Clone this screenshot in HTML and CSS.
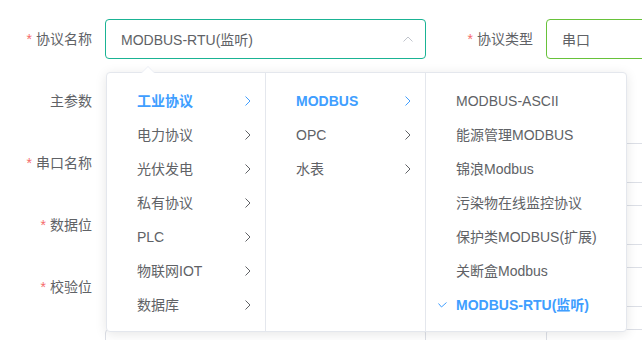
FILE: index.html
```html
<!DOCTYPE html>
<html lang="zh">
<head>
<meta charset="utf-8">
<link rel="stylesheet" href="styles.css">
</head>
<body>
<div class="form">
  <div class="row">
    <div class="item">
      <label class="label"><span class="req">*</span>协议名称</label>
      <div class="select">
        <div class="input input-focus">
          <span class="value">MODBUS-RTU(监听)</span>
          <svg class="caret" width="10" height="6" viewBox="0 0 10 6"><path d="M0.5 5.5 L5 1 L9.5 5.5" fill="none" stroke="#c0c4cc" stroke-width="1"/></svg>
        </div>
        <div class="popper">
          <div class="popper-arrow"></div>
          <ul class="menu menu-1">
            <li class="node active">工业协议<svg class="chev" width="6" height="10" viewBox="0 0 6 10"><path d="M0.5 0.5 L5 5 L0.5 9.5" fill="none" stroke="#409eff" stroke-width="1"/></svg></li>
            <li class="node">电力协议<svg class="chev" width="6" height="10" viewBox="0 0 6 10"><path d="M0.5 0.5 L5 5 L0.5 9.5" fill="none" stroke="#606266" stroke-width="1"/></svg></li>
            <li class="node">光伏发电<svg class="chev" width="6" height="10" viewBox="0 0 6 10"><path d="M0.5 0.5 L5 5 L0.5 9.5" fill="none" stroke="#606266" stroke-width="1"/></svg></li>
            <li class="node">私有协议<svg class="chev" width="6" height="10" viewBox="0 0 6 10"><path d="M0.5 0.5 L5 5 L0.5 9.5" fill="none" stroke="#606266" stroke-width="1"/></svg></li>
            <li class="node">PLC<svg class="chev" width="6" height="10" viewBox="0 0 6 10"><path d="M0.5 0.5 L5 5 L0.5 9.5" fill="none" stroke="#606266" stroke-width="1"/></svg></li>
            <li class="node">物联网IOT<svg class="chev" width="6" height="10" viewBox="0 0 6 10"><path d="M0.5 0.5 L5 5 L0.5 9.5" fill="none" stroke="#606266" stroke-width="1"/></svg></li>
            <li class="node">数据库<svg class="chev" width="6" height="10" viewBox="0 0 6 10"><path d="M0.5 0.5 L5 5 L0.5 9.5" fill="none" stroke="#606266" stroke-width="1"/></svg></li>
          </ul>
          <ul class="menu menu-2">
            <li class="node active">MODBUS<svg class="chev" width="6" height="10" viewBox="0 0 6 10"><path d="M0.5 0.5 L5 5 L0.5 9.5" fill="none" stroke="#409eff" stroke-width="1"/></svg></li>
            <li class="node">OPC<svg class="chev" width="6" height="10" viewBox="0 0 6 10"><path d="M0.5 0.5 L5 5 L0.5 9.5" fill="none" stroke="#606266" stroke-width="1"/></svg></li>
            <li class="node">水表<svg class="chev" width="6" height="10" viewBox="0 0 6 10"><path d="M0.5 0.5 L5 5 L0.5 9.5" fill="none" stroke="#606266" stroke-width="1"/></svg></li>
          </ul>
          <ul class="menu menu-3">
            <li class="node">MODBUS-ASCII</li>
            <li class="node">能源管理MODBUS</li>
            <li class="node">锦浪Modbus</li>
            <li class="node">污染物在线监控协议</li>
            <li class="node">保护类MODBUS(扩展)</li>
            <li class="node">关断盒Modbus</li>
            <li class="node active"><svg class="check" width="9" height="6" viewBox="0 0 9 6"><path d="M0.5 1.5 L3.5 5 L8.5 0.5" fill="none" stroke="#409eff" stroke-width="1"/></svg>MODBUS-RTU(监听)</li>
          </ul>
        </div>
      </div>
    </div>
    <div class="item">
      <label class="label label-2"><span class="req">*</span>协议类型</label>
      <div class="input input-ok input-right"><span class="value">串口</span></div>
    </div>
  </div>

  <div class="row">
    <div class="item">
      <label class="label">主参数</label>
    </div>
  </div>

  <div class="row">
    <div class="item">
      <label class="label"><span class="req">*</span>串口名称</label>
      <div class="spacer"></div>
    </div>
    <div class="item">
      <div class="label label-2"></div>
      <div class="input input-right"></div>
    </div>
  </div>

  <div class="row">
    <div class="item">
      <label class="label"><span class="req">*</span>数据位</label>
      <div class="spacer"></div>
    </div>
    <div class="item">
      <div class="label label-2"></div>
      <div class="input input-right"></div>
    </div>
  </div>

  <div class="row">
    <div class="item">
      <label class="label"><span class="req">*</span>校验位</label>
      <div class="spacer"></div>
    </div>
    <div class="item">
      <div class="label label-2"></div>
      <div class="input input-right"></div>
    </div>
  </div>

  <div class="row">
    <div class="item">
      <div class="label"></div>
      <div class="input input-left"></div>
    </div>
    <div class="item">
      <div class="label label-2"></div>
      <div class="input input-right"></div>
    </div>
  </div>
</div>
</body>
</html>
```

FILE: styles.css
```css
* {
  box-sizing: border-box;
}

html, body {
  margin: 0;
  padding: 0;
  background: #fff;
  overflow: hidden;
  width: 642px;
  height: 340px;
}

body {
  font-family: "Liberation Sans", "Noto Sans CJK SC", sans-serif;
  font-size: 14px;
  color: #606266;
}

.form {
  padding-top: 19px;
}

.row {
  display: flex;
  height: 40px;
  margin-bottom: 22px;
}

.item {
  display: flex;
  height: 40px;
}

.label {
  width: 105px;
  padding-right: 13px;
  text-align: right;
  line-height: 40px;
  color: #606266;
  white-space: nowrap;
}

.label-2 {
  width: 120px;
}

.req {
  color: #f56c6c;
  margin-right: 4px;
}

.spacer {
  width: 321px;
}

.select {
  position: relative;
  width: 321px;
}

.input {
  height: 40px;
  border: 1px solid #dcdfe6;
  border-radius: 4px;
  background: #fff;
  display: flex;
  align-items: center;
  padding: 0 12px 0 15px;
}

.input-left {
  width: 321px;
}

.input-right {
  width: 220px;
}

.input-focus {
  border-color: #1ab394;
  justify-content: space-between;
}

.input-ok {
  border-color: #67c23a;
}

.value {
  color: #606266;
  white-space: nowrap;
}

.caret {
  display: block;
}

.popper {
  position: absolute;
  top: 53px;
  left: 1px;
  z-index: 10;
  display: flex;
  background: #fff;
  border: 1px solid #e4e7ed;
  border-radius: 4px;
  box-shadow: 0 2px 12px 0 rgba(0, 0, 0, 0.1);
}

.popper-arrow {
  position: absolute;
  top: -7px;
  left: 34px;
  width: 0;
  height: 0;
  border-left: 7px solid transparent;
  border-right: 7px solid transparent;
  border-bottom: 7px solid #ebeef5;
}

.popper-arrow::after {
  content: "";
  position: absolute;
  top: 1px;
  left: -6px;
  width: 0;
  height: 0;
  border-left: 6px solid transparent;
  border-right: 6px solid transparent;
  border-bottom: 6px solid #fff;
}

.menu {
  list-style: none;
  margin: 0;
  padding: 11px 0 9px;
  height: 258px;
}

.menu-1 {
  width: 159px;
  border-right: 1px solid #e4e7ed;
}

.menu-2 {
  width: 160px;
  border-right: 1px solid #e4e7ed;
}

.menu-3 {
  width: 200px;
}

.node {
  position: relative;
  height: 34px;
  line-height: 34px;
  padding: 0 30px;
  color: #606266;
  white-space: nowrap;
}

.node.active {
  color: #409eff;
  font-weight: 700;
}

.chev {
  position: absolute;
  right: 14px;
  top: 12px;
  display: block;
}

.check {
  position: absolute;
  left: 12px;
  top: 14px;
  display: block;
}
```
